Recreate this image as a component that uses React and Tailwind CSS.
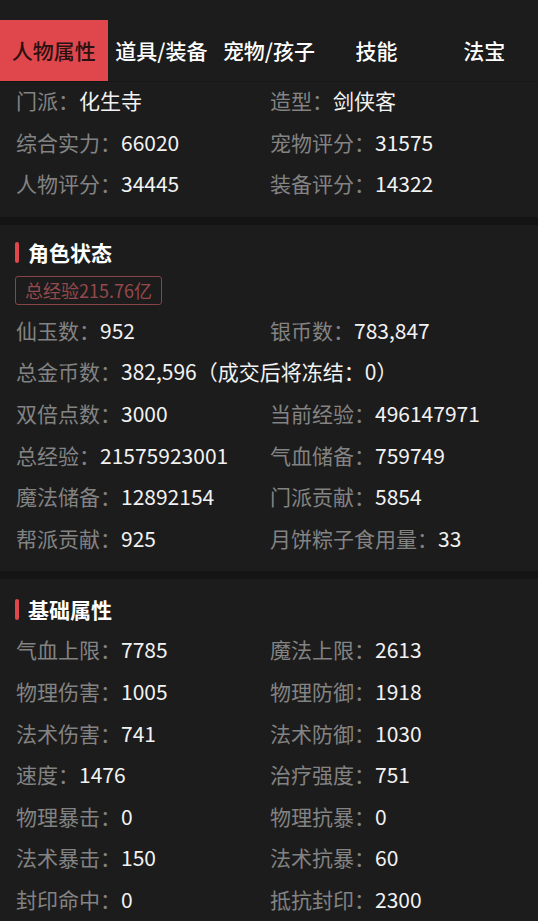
import React, { useState } from 'react'

const TABS = ['人物属性', '道具/装备', '宠物/孩子', '技能', '法宝']

const BASIC = [
  ['门派', '化生寺', '造型', '剑侠客'],
  ['综合实力', '66020', '宠物评分', '31575'],
  ['人物评分', '34445', '装备评分', '14322'],
]

const STATUS = [
  ['仙玉数', '952', '银币数', '783,847'],
  ['总金币数', '382,596（成交后将冻结：0）'],
  ['双倍点数', '3000', '当前经验', '496147971'],
  ['总经验', '21575923001', '气血储备', '759749'],
  ['魔法储备', '12892154', '门派贡献', '5854'],
  ['帮派贡献', '925', '月饼粽子食用量', '33'],
]

const ATTRS = [
  ['气血上限', '7785', '魔法上限', '2613'],
  ['物理伤害', '1005', '物理防御', '1918'],
  ['法术伤害', '741', '法术防御', '1030'],
  ['速度', '1476', '治疗强度', '751'],
  ['物理暴击', '0', '物理抗暴', '0'],
  ['法术暴击', '150', '法术抗暴', '60'],
  ['封印命中', '0', '抵抗封印', '2300'],
]

function Cell({ label, value }) {
  return (
    <div className="flex items-center whitespace-nowrap">
      <span className="text-[#838383]">{label}：</span>
      <span className="text-[#f2f2f2]">{value}</span>
    </div>
  )
}

function Rows({ rows }) {
  return rows.map((r, i) =>
    r.length === 2 ? (
      <div key={i} className="h-[41.6px] pb-1 flex items-center">
        <Cell label={r[0]} value={r[1]} />
      </div>
    ) : (
      <div key={i} className="h-[41.6px] pb-1 grid grid-cols-[254px_1fr] items-center">
        <Cell label={r[0]} value={r[1]} />
        <Cell label={r[2]} value={r[3]} />
      </div>
    )
  )
}

function Heading({ children }) {
  return (
    <div className="h-10 flex items-center gap-[9px]">
      <span className="w-1 h-[21px] rounded-full bg-[#e0474c]" />
      <span className="font-bold text-white">{children}</span>
    </div>
  )
}

export default function App() {
  const [tab, setTab] = useState(0)

  return (
    <div
      className="w-[538px] min-h-[921px] bg-[#1c1c1c] text-[21px] overflow-hidden"
      style={{ fontFamily: '"Noto Sans CJK SC", "Noto Sans", sans-serif' }}
    >
      <div className="h-5" />
      {/* Tabs */}
      <div className="h-[62px] flex border-b border-[#161616]">
        {TABS.map((t, i) => (
          <button
            key={t}
            onClick={() => setTab(i)}
            className={
              'flex-1 flex items-center justify-center font-medium ' +
              (tab === i ? 'bg-[#e0474c] text-[#2b1111]' : 'text-white')
            }
          >
            {t}
          </button>
        ))}
      </div>

      {/* Basic info */}
      <div className="pl-4 pb-[10px]">
        <Rows rows={BASIC} />
      </div>

      <div className="h-2 bg-[#141414]" />

      {/* 角色状态 */}
      <div className="pl-[15px] pt-[8px] pb-[10px]">
        <Heading>角色状态</Heading>
        <div className="mt-[3px] mb-[7px] inline-flex h-[29px] items-center px-[9px] rounded-[3px] border border-[#874346] text-[18px] text-[#94494c]">
          总经验215.76亿
        </div>
        <div className="pl-px">
          <Rows rows={STATUS} />
        </div>
      </div>

      <div className="h-2 bg-[#141414]" />

      {/* 基础属性 */}
      <div className="pl-[15px] pt-[10px] pb-[10px]">
        <Heading>基础属性</Heading>
        <div className="pl-px mt-[2px]">
          <Rows rows={ATTRS} />
        </div>
      </div>
    </div>
  )
}
